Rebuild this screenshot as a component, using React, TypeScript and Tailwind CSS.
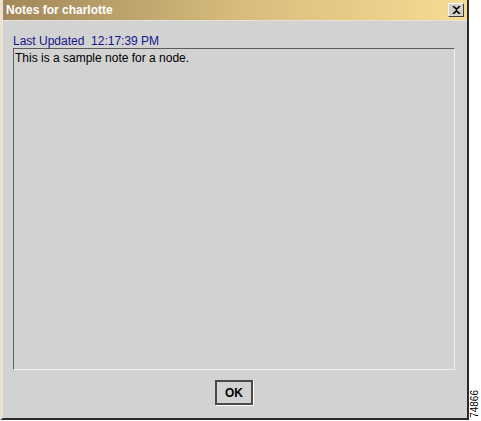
export default function App() {
  return (
    <div className="flex w-[481px] h-[421px] bg-white font-['Liberation_Sans',Arial,sans-serif]">
      <div className="flex flex-col w-[469px] h-[420px] bg-[#d2d2d2] border-l-[3px] border-l-[#ebe3d2] border-r-2 border-r-[#2a2a2a] border-b-2 border-b-[#2a2a2a]">
        <div className="flex items-center justify-between h-[21px] pl-[3px] pr-[3px] bg-gradient-to-r from-[#a1875a] via-[#d6bb7c] to-[#f7dc94] border-b border-b-[#e8e2d2]">
          <span className="text-white font-bold text-[12px] leading-none">Notes for charlotte</span>
          <button className="flex items-center justify-center w-[16px] h-[14px] bg-[#d4d0c8] border border-t-white border-l-white border-r-[#404040] border-b-[#404040]">
            <svg width="9" height="8" viewBox="0 0 9 8">
              <path d="M1 0 L4.5 3.2 L8 0 M1 8 L4.5 4.8 L8 8" stroke="#000" strokeWidth="1.6" fill="none" />
            </svg>
          </button>
        </div>

        <div className="flex flex-col flex-1 pl-[10px] pr-[12px] pt-[13px] pb-[13px]">
          <div className="text-[12px] leading-[14px] text-[#14148a] whitespace-pre">Last Updated  12:17:39 PM</div>
          <div className="flex-1 border border-t-[#5c5c5c] border-l-[#5c5c5c] border-r-[#f2f2f2] border-b-[#f2f2f2] px-[1px] pt-[2px]">
            <p className="text-[12px] leading-[14px] text-black">This is a sample note for a node.</p>
          </div>
          <div className="flex justify-center mt-[10px]">
            <button className="w-[38px] h-[25px] border-2 border-[#4a4a4a] shadow-[1px_1px_0_#ffffff] bg-[#d2d2d2] text-[12px] font-bold text-black">
              OK
            </button>
          </div>
        </div>
      </div>

      <div className="flex flex-1 items-end justify-center pb-[3px]">
        <span className="[writing-mode:vertical-rl] rotate-180 text-[10px] leading-none text-black">74866</span>
      </div>
    </div>
  );
}
